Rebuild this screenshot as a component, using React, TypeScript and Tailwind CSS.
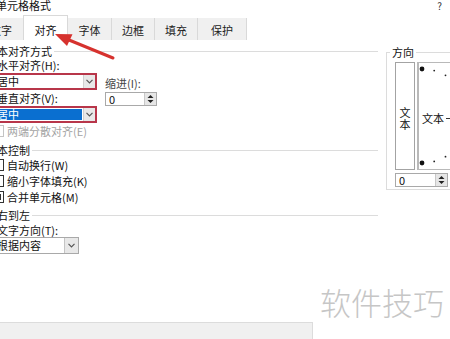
import type { ReactNode } from 'react';

function Chevron() {
  return (
    <svg width="7" height="5" viewBox="0 0 7 5">
      <polyline points="0.5,0.8 3.5,3.8 6.5,0.8" fill="none" stroke="#555" strokeWidth="1.2" />
    </svg>
  );
}

function SpinArrows() {
  return (
    <svg width="7" height="10" viewBox="0 0 7 10">
      <polygon points="0.5,4 3.5,1 6.5,4" fill="#222" />
      <polygon points="0.5,6 3.5,9 6.5,6" fill="#222" />
    </svg>
  );
}

function GroupHeader({ label, className = '' }: { label: string; className?: string }) {
  return (
    <div className={`flex h-[14px] items-center gap-[2px] ${className}`}>
      <span className="whitespace-nowrap leading-[14px]">{label}</span>
      <div className="h-px flex-1 bg-[#dcdcdc]" />
    </div>
  );
}

function Checkbox({
  label,
  state = 'off',
  disabled = false,
  className = '',
}: {
  label: ReactNode;
  state?: 'off' | 'mixed';
  disabled?: boolean;
  className?: string;
}) {
  return (
    <div className={`flex items-center pl-[6px] ${className}`}>
      <div
        className={`flex h-[12px] w-[12px] shrink-0 items-center justify-center border bg-white ${
          disabled ? 'border-[#c4c4c4]' : 'border-[#333]'
        }`}
      >
        {state === 'mixed' && <div className="h-[6px] w-[6px] bg-[#333]" />}
      </div>
      <span className={`ml-[3px] whitespace-nowrap leading-[14px] ${disabled ? 'text-[#a3a3a3]' : ''}`}>{label}</span>
    </div>
  );
}

function Spin({ value, className = '' }: { value: string; className?: string }) {
  return (
    <div className={`flex h-[14px] border border-[#a9a9a9] bg-white ${className}`}>
      <span className="flex-1 pl-[3px] leading-[12px]">{value}</span>
      <div className="flex w-[12px] items-center justify-center border-l border-[#c8c8c8] bg-[#e6e6e6]">
        <SpinArrows />
      </div>
    </div>
  );
}

export default function App() {
  const tabs = [
    { label: '数字', w: 'w-[44px]' },
    { label: '对齐', w: 'w-[45px]', active: true },
    { label: '字体', w: 'w-[44px]' },
    { label: '边框', w: 'w-[43px]' },
    { label: '填充', w: 'w-[43px]' },
    { label: '保护', w: 'w-[49px]' },
  ];

  return (
    <div className="relative flex h-[339px] w-[450px] flex-col overflow-hidden bg-white font-['Noto_Sans_CJK_SC','Noto_Sans',sans-serif] text-[11px] text-[#111]">
      {/* title bar */}
      <div className="flex h-[15px] shrink-0 items-start justify-between">
        <span className="-ml-[4px] leading-[11px]">单元格格式</span>
        <span className="mr-[8px] mt-[1px] text-[10px] leading-[10px] text-[#333]">?</span>
      </div>

      {/* tabs */}
      <div className="flex h-[25px] shrink-0 items-end">
        {tabs.map((t, i) =>
          t.active ? (
            <div
              key={t.label}
              className={`flex h-[25px] shrink-0 items-center justify-center border-x border-t border-[#d9d9d9] bg-white pt-[5px] ${t.w}`}
            >
              {t.label}
            </div>
          ) : (
            <div
              key={t.label}
              className={`flex h-[22px] shrink-0 items-center justify-center bg-[#f0f0f0] pt-[2px] text-[#222] ${t.w} ${
                i === 0 ? '-ml-[21px]' : 'border-r border-[#d9d9d9]'
              }`}
            >
              {t.label}
            </div>
          )
        )}
      </div>

      {/* body */}
      <div className="flex shrink-0 items-start">
        <div className="-ml-[14px] w-[392px] shrink-0 pt-[4px]">
          <GroupHeader label="文本对齐方式" />
          <div className="flex pl-[11px]">
            <div className="w-[100px] shrink-0">
              <div className="h-[14px] whitespace-nowrap leading-[14px]">水平对齐(H):</div>
              <div className="-ml-[4px] mt-[1px] flex h-[17px] w-[104px] border-2 border-[#b8364a] bg-white">
                <span className="flex-1 pl-[2px] leading-[13px]">居中</span>
                <div className="flex w-[12px] items-center justify-center border-l border-[#d0d0d0] bg-[#e8e8e8]">
                  <Chevron />
                </div>
              </div>
              <div className="mt-[1px] h-[14px] whitespace-nowrap leading-[14px]">垂直对齐(V):</div>
              <div className="-ml-[4px] mt-[1px] flex h-[17px] w-[104px] border-2 border-[#b8364a] bg-white">
                <div className="flex flex-1 items-center py-[1px] pr-[1px]">
                  <span className="h-full w-full bg-[#0a6fd0] pl-[2px] leading-[11px] text-white">居中</span>
                </div>
                <div className="flex w-[12px] items-center justify-center border-l border-[#d0d0d0] bg-[#e8e8e8]">
                  <Chevron />
                </div>
              </div>
            </div>
            <div className="ml-[8px] pt-[18px]">
              <div className="h-[14px] whitespace-nowrap leading-[14px] text-[#444]">缩进(I):</div>
              <Spin value="0" className="mt-[2px] w-[52px]" />
            </div>
          </div>
          <Checkbox label="两端分散对齐(E)" disabled className="mt-[1px] h-[14px]" />

          <GroupHeader label="文本控制" className="mt-[5px]" />
          <Checkbox label="自动换行(W)" className="h-[16px]" />
          <Checkbox label="缩小字体填充(K)" className="h-[16px]" />
          <Checkbox label="合并单元格(M)" state="mixed" className="h-[16px]" />

          <GroupHeader label="从右到左" className="mt-[3px]" />
          <div className="pl-[11px]">
            <div className="mt-[1px] h-[14px] whitespace-nowrap leading-[14px]">文字方向(T):</div>
            <div className="-ml-[2px] flex h-[17px] w-[84px] border border-[#a9a9a9] bg-white">
              <span className="flex-1 pl-[1px] leading-[15px]">根据内容</span>
              <div className="flex w-[14px] items-center justify-center border-l border-[#c4c4c4] bg-[#e8e8e8]">
                <Chevron />
              </div>
            </div>
          </div>
        </div>

        {/* orientation group */}
        <fieldset className="ml-[8px] mt-[5px] w-[82px] shrink-0 border border-[#dcdcdc] pb-[2px] pt-[3px]">
          <legend className="ml-[3px] px-[2px] leading-[14px]">方向</legend>
          <div className="flex pl-[8px]">
            <div className="flex h-[108px] w-[20px] shrink-0 flex-col items-center justify-center border border-[#a3a3a3] bg-white pt-[4px] leading-[12px]">
              <span>文</span>
              <span>本</span>
            </div>
            <div className="relative ml-[2px] flex h-[108px] w-[50px] shrink-0 items-center border-y border-l-2 border-[#b9b9b9] bg-white pl-[3px] pt-[4px]">
              <svg className="absolute left-0 top-0" width="60" height="106" viewBox="0 0 60 106">
                <circle cx="3" cy="6" r="2.4" fill="#111" />
                <circle cx="15.2" cy="7.6" r="0.9" fill="#222" />
                <circle cx="26.5" cy="12.3" r="0.9" fill="#222" />
                <circle cx="36.2" cy="19.8" r="0.9" fill="#222" />
                <circle cx="3" cy="100" r="2.4" fill="#111" />
                <circle cx="15.2" cy="98.4" r="0.9" fill="#222" />
                <circle cx="26.5" cy="93.7" r="0.9" fill="#222" />
                <circle cx="36.2" cy="86.2" r="0.9" fill="#222" />
              </svg>
              <span className="relative whitespace-nowrap leading-[12px]">文本</span>
              <div className="relative ml-[2px] mt-[1px] h-px w-[30px] shrink-0 bg-[#333]" />
            </div>
          </div>
          <Spin value="0" className="ml-[8px] mt-[3px] w-[53px]" />
        </fieldset>
      </div>

      {/* dialog button bar, cut off */}
      <div className="mt-auto h-[17px] w-[313px] shrink-0 border-r border-t border-[#dcdcdc] bg-[#f0f0f0]" />

      {/* annotation arrow */}
      <svg className="pointer-events-none absolute left-0 top-0" width="450" height="339" viewBox="0 0 450 339">
        <line x1="113" y1="58" x2="69" y2="40" stroke="#d6322e" strokeWidth="3" strokeLinecap="round" />
        <polygon points="55,34 72.5,34.2 67,46" fill="#d6322e" />
      </svg>

      {/* watermark */}
      <div className="pointer-events-none absolute left-[320px] top-[284px] whitespace-nowrap text-[31px] font-light leading-[36px] text-[#c6c6c6]">
        软件技巧
      </div>
    </div>
  );
}
